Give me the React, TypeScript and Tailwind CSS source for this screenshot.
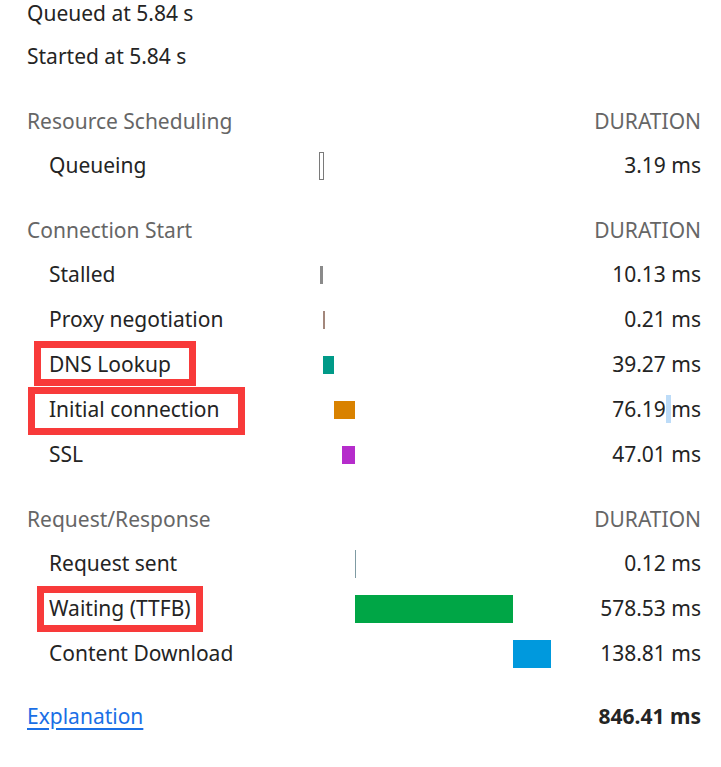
type Bar = { left: number; width: number; height: number; className: string }

type Row = {
  label: string
  duration: React.ReactNode
  bar: Bar
  mark?: { left: number; top: number; width: number; height: number }
}

type Section = { title: string; rows: Row[] }

const sections: Section[] = [
  {
    title: "Resource Scheduling",
    rows: [
      { label: "Queueing", duration: "3.19 ms", bar: { left: 0, width: 5, height: 28, className: "border border-[#7a7a7a] bg-white" } },
    ],
  },
  {
    title: "Connection Start",
    rows: [
      { label: "Stalled", duration: "10.13 ms", bar: { left: 1, width: 3, height: 18, className: "bg-[#8a8a8a]" } },
      { label: "Proxy negotiation", duration: "0.21 ms", bar: { left: 4, width: 2, height: 18, className: "bg-[#a3877c]" } },
      {
        label: "DNS Lookup",
        duration: "39.27 ms",
        bar: { left: 4, width: 11, height: 18, className: "bg-[#009a88]" },
        mark: { left: 7, top: -1, width: 162, height: 45 },
      },
      {
        label: "Initial connection",
        duration: (
          <>
            76.19<span className="bg-[#bddcf8]"> </span>ms
          </>
        ),
        bar: { left: 15, width: 21, height: 18, className: "bg-[#d98200]" },
        mark: { left: 1, top: 0, width: 217, height: 48 },
      },
      { label: "SSL", duration: "47.01 ms", bar: { left: 23, width: 13, height: 18, className: "bg-[#b52ccb]" } },
    ],
  },
  {
    title: "Request/Response",
    rows: [
      { label: "Request sent", duration: "0.12 ms", bar: { left: 36, width: 1, height: 28, className: "bg-[#7f9ba3]" } },
      {
        label: "Waiting (TTFB)",
        duration: "578.53 ms",
        bar: { left: 36, width: 158, height: 28, className: "bg-[#00a646]" },
        mark: { left: 10, top: 0, width: 166, height: 46 },
      },
      { label: "Content Download", duration: "138.81 ms", bar: { left: 194, width: 38, height: 28, className: "bg-[#0099dd]" } },
    ],
  },
]

const TimingRow = ({ row }: { row: Row }) => (
  <div className="grid h-[45px] grid-cols-[292px_1fr_150px] items-center leading-[45px]">
    <div className="relative h-full pl-[22px]">
      {row.mark && (
        <span
          className="absolute border-[7px] border-[#f83a3a]"
          style={{ left: row.mark.left, top: row.mark.top, width: row.mark.width, height: row.mark.height }}
        />
      )}
      <span className="relative">{row.label}</span>
    </div>
    <div className="flex h-full items-center">
      <div
        className={row.bar.className}
        style={{ marginLeft: row.bar.left, width: row.bar.width, height: row.bar.height }}
      />
    </div>
    <div className="text-right whitespace-pre">{row.duration}</div>
  </div>
)

export default function App() {
  return (
    <div className="min-h-[767px] w-[721px] overflow-hidden bg-white pl-[27px] pr-[20px] text-[21px] text-[#242424] font-['Noto_Sans',sans-serif]">
      <div className="h-[27px] leading-[27px]">Queued at 5.84 s</div>
      <div className="mt-[7px] h-[45px] leading-[45px]">Started at 5.84 s</div>

      {sections.map((section) => (
        <div key={section.title} className="mt-[20px]">
          <div className="flex h-[44px] items-center justify-between leading-[44px] text-[#666666]">
            <span>{section.title}</span>
            <span>DURATION</span>
          </div>
          {section.rows.map((row) => (
            <TimingRow key={row.label} row={row} />
          ))}
        </div>
      ))}

      <div className="mt-[18px] flex h-[44px] items-center justify-between leading-[44px]">
        <a href="#" className="text-[#1a6fe6] underline underline-offset-[4px]">
          Explanation
        </a>
        <span className="font-bold">846.41 ms</span>
      </div>
    </div>
  )
}
